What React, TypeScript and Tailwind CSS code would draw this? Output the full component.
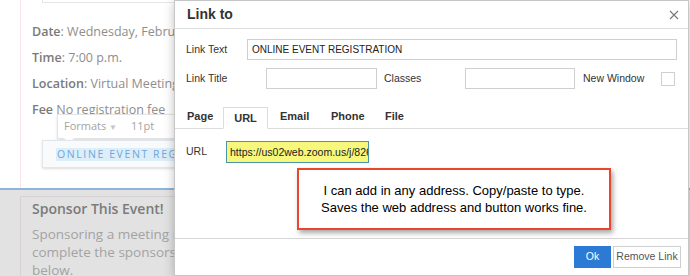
import React from "react";

const sans = "font-['Liberation_Sans',Arial,sans-serif]";
const page = "font-['Open_Sans','Noto_Sans',sans-serif]";

function EventDetails() {
  const rows = [
    { label: "Date", sep: ":", value: " Wednesday, February 24, 2021" },
    { label: "Time", sep: ":", value: " 7:00 p.m." },
    { label: "Location", sep: ":", value: " Virtual Meeting" },
    { label: "Fee", sep: "", value: " No registration fee" },
  ];
  return (
    <div className="flex flex-col gap-[8px] pl-[11px] pt-[20px] text-[12.5px] leading-[18px] text-[#8e8e8e]">
      {rows.map((r) => (
        <p key={r.label} className="whitespace-nowrap">
          <span className="font-semibold text-[#7a7a7a]">{r.label}</span>
          {r.sep}
          {r.value}
        </p>
      ))}
    </div>
  );
}

function EditorToolbar() {
  return (
    <>
      <div className="absolute left-[57px] top-[114px] flex h-[25px] w-[140px] items-center gap-[14px] border border-[#e4e4e4] bg-white pl-[6px] text-[11px] text-[#a3a3a3] shadow-sm">
        <span>
          Formats <span className="text-[8px] text-[#c4c4c4]">▼</span>
        </span>
        <span>11pt</span>
        <span className="absolute -bottom-[5px] left-[7px] h-[8px] w-[8px] rotate-45 border-b border-r border-[#e4e4e4] bg-white" />
      </div>
      <div className="absolute left-[42px] top-[140px] flex h-[28px] w-[160px] items-center border border-[#e2e6ea] bg-[#f8fafb] pl-[13px] shadow-sm">
        <span className="whitespace-nowrap bg-[#ddeefb] px-[1px] text-[10.5px] leading-[13px] tracking-[1.6px] text-[#6ea7d6]">
          ONLINE EVENT REGISTRATION
        </span>
      </div>
    </>
  );
}

function LinkDialog() {
  const input = "h-[21px] border border-[#cfcfcf] bg-white px-[4px] text-[10px] leading-[19px] text-[#222]";
  return (
    <div className={`absolute left-[174px] top-0 flex h-[276px] w-[515px] flex-col border border-[#c6c6c6] bg-white shadow-[0_2px_10px_rgba(0,0,0,0.25)] ${sans}`}>
      <div className="flex h-[28px] items-center justify-between border-b border-[#dedede] pl-[12px] pr-[9px]">
        <span className="text-[14px] font-bold text-[#333]">Link to</span>
        <svg width="10" height="10" viewBox="0 0 10 10" className="text-[#777]">
          <path d="M1 1 L9 9 M9 1 L1 9" stroke="currentColor" strokeWidth="1.1" />
        </svg>
      </div>

      <div className="flex flex-col px-[11px] pt-[10px] text-[10.5px] text-[#333]">
        <div className="flex items-center">
          <span className="w-[61px]">Link Text</span>
          <div className={`${input} flex-1`}>ONLINE EVENT REGISTRATION</div>
        </div>
        <div className="mt-[8px] flex items-center">
          <span className="w-[80px]">Link Title</span>
          <div className={`${input} h-[20px] w-[111px]`} />
          <span className="ml-[7px] w-[81px]">Classes</span>
          <div className={`${input} h-[20px] w-[110px]`} />
          <span className="ml-[8px] flex-1">New Window</span>
          <div className="mr-[2px] h-[14px] w-[14px] border border-[#cfcfcf]" />
        </div>
      </div>

      <div className="mt-[18px] flex h-[22px] items-end border-b border-[#dcdcdc] pl-[12px] text-[11px] font-bold text-[#333]">
        <span className="w-[36px] shrink-0 pb-[4px]">Page</span>
        <span className="-mb-px flex h-[22px] w-[45px] shrink-0 items-center justify-center border border-b-white border-[#dcdcdc] bg-white">URL</span>
        <span className="w-[63px] shrink-0 pb-[4px] pl-[12px]">Email</span>
        <span className="w-[54px] shrink-0 pb-[4px]">Phone</span>
        <span className="pb-[4px]">File</span>
      </div>

      <div className="mt-[12px] flex items-center px-[11px] text-[10.5px] text-[#333]">
        <span className="w-[40px]">URL</span>
        <div className="h-[22px] w-[143px] overflow-hidden whitespace-nowrap border border-[#4b93a8] bg-[#f7f77b] px-[3px] text-[10.5px] leading-[20px] text-[#222]">
          https://us02web.zoom.us/j/82654321
        </div>
      </div>

      <div className="mt-auto flex h-[37px] items-center justify-end gap-[2px] border-t border-[#d6d6d6] pr-[7px] text-[10.5px]">
        <button className="h-[22px] w-[37px] bg-[#2a7ad6] text-white">Ok</button>
        <button className="h-[22px] w-[68px] whitespace-nowrap border border-[#cfcfcf] bg-white text-[#555]">Remove Link</button>
      </div>
    </div>
  );
}

export default function App() {
  return (
    <div className={`relative h-[276px] w-[690px] overflow-hidden bg-white ${page}`}>
      <div className="h-[188px] pl-[20px]">
        <div className="relative h-full border-l border-[#fbe3ea]">
          <div className="ml-[21px] h-[3px] w-[200px] border-x border-b border-[#e6e6e6]" />
          <EventDetails />
        </div>
      </div>
      <div className="h-[2px] bg-[#8fb3db]" />
      <div className="h-[86px] bg-[#e2e2e2] pl-[20px] pt-[6px]">
        <div className="h-full border-l border-t border-[#d9d2d4] pl-[11px] pt-[1px]">
          <h2 className="text-[14px] font-semibold leading-[22px] text-[#7b7b7b]">Sponsor This Event!</h2>
          <p className="mt-[5px] whitespace-nowrap text-[13.5px] leading-[18px] text-[#a3a3a3]">
            Sponsoring a meeting is a great way to support us.
            <br />
            complete the sponsorship form and submit it
            <br />
            below.
          </p>
        </div>
      </div>

      <EditorToolbar />
      <LinkDialog />

      <div className={`absolute left-[297px] top-[168px] flex h-[62px] w-[314px] flex-col items-center justify-center border-2 border-[#e9462c] bg-white text-[13px] leading-[17px] text-black shadow-[2px_3px_5px_rgba(0,0,0,0.35)] ${sans}`}>
        <span>I can add in any address. Copy/paste to type.</span>
        <span>Saves the web address and button works fine.</span>
      </div>
    </div>
  );
}
